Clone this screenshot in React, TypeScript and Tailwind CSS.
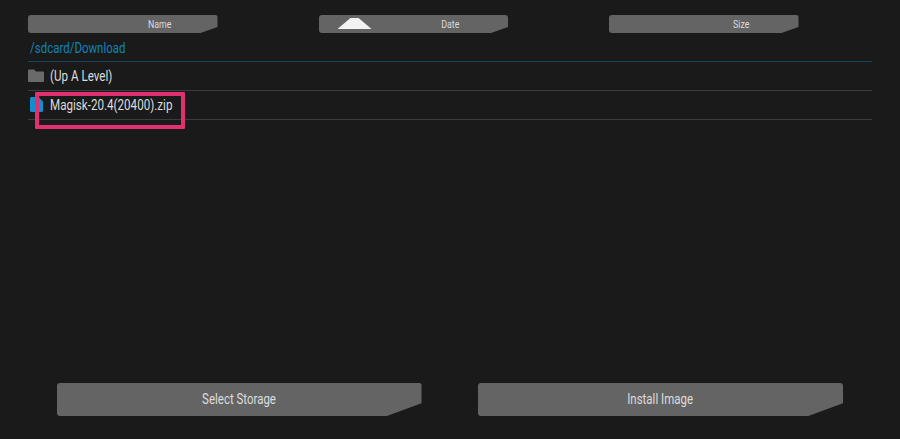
const rowLine = 'border-b border-[#3a3d3f]';

function SortButton({ label, arrow }: { label: string; arrow?: boolean }) {
  return (
    <div className="relative flex h-[18px] w-[189.5px] items-center justify-center rounded-[3px] bg-[#646464] pl-[74px] pt-[3px] text-[11px] text-[#dcdcdc] [clip-path:polygon(0_0,100%_0,100%_67%,91%_100%,0_100%)]">
      {arrow && <div className="absolute left-[19px] top-[3px] h-[11px] w-[34px] bg-[#f2f2f2] [clip-path:polygon(0_100%,38%_0,62%_0,100%_100%)]" />}
      <span className="inline-block scale-x-[0.8]">{label}</span>
    </div>
  );
}

function ActionButton({ label }: { label: string }) {
  return (
    <div className="flex h-[33px] w-[365px] items-center justify-center rounded-[3px] bg-[#646464] text-[14px] text-[#dcdcdc] [clip-path:polygon(0_0,100%_0,100%_61%,90.5%_100%,0_100%)]">
      <span className="inline-block scale-x-[0.82]">{label}</span>
    </div>
  );
}

export default function App() {
  return (
    <div className="relative flex h-[439px] w-[900px] flex-col overflow-hidden bg-[#1a1a1a] font-['Roboto',sans-serif]">
      <div className="flex flex-col pl-[28px] pr-[28px] pt-[15px]">
        <div className="flex gap-[101px]">
          <SortButton label="Name" />
          <SortButton label="Date" arrow />
          <SortButton label="Size" />
        </div>

        <div className="flex h-[29px] items-center border-b border-[#17465c] pl-[2px] pt-[3px] text-[14px] text-[#0f83b8]">
          <span className="inline-block origin-left scale-x-[0.82]">/sdcard/Download</span>
        </div>

        <div className={`flex h-[29px] items-center gap-[6px] ${rowLine} text-[14px] text-[#dcdcdc]`}>
          <svg width="16" height="13" viewBox="0 0 16 13" className="mb-[1px] shrink-0">
            <path d="M0 1.500Q0 .5 1 .5H6L8 2.500H15Q16 2.500 16 3.500V12Q16 13 15 13H1Q0 13 0 12Z" fill="#6a6a6a" />
          </svg>
          <span className="inline-block origin-left scale-x-[0.83]">(Up A Level)</span>
        </div>

        <div className={`flex h-[29px] items-center gap-[7px] ${rowLine} text-[14px] text-[#dcdcdc]`}>
          <svg width="13" height="15" viewBox="0 0 13 15" className="mb-[2px] ml-[2px] shrink-0">
            <path d="M1.500 0H8.500L13 4.500V13.500Q13 15 11.500 15H1.500Q0 15 0 13.500V1.500Q0 0 1.500 0Z" fill="#0f8fd0" />
          </svg>
          <span className="inline-block origin-left scale-x-[0.83]">Magisk-20.4(20400).zip</span>
        </div>
      </div>

      <div className="mt-auto flex gap-[56.5px] pb-[23px] pl-[56.5px]">
        <ActionButton label="Select Storage" />
        <ActionButton label="Install Image" />
      </div>

      {/* annotation drawn over the screenshot */}
      <div className="absolute left-[35px] top-[92px] h-[37px] w-[150px] rounded-[1px] border-4 border-[#e0306f]" />
    </div>
  );
}
